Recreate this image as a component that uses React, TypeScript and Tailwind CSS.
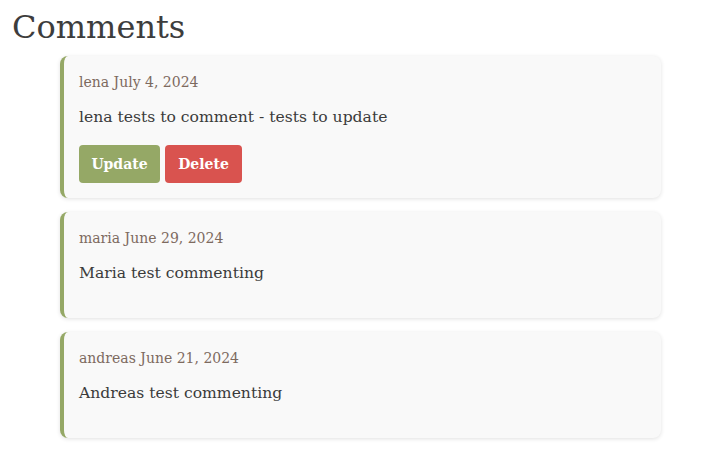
const comments = [
  { author: "lena", date: "July 4, 2024", text: "lena tests to comment - tests to update", own: true },
  { author: "maria", date: "June 29, 2024", text: "Maria test commenting", own: false },
  { author: "andreas", date: "June 21, 2024", text: "Andreas test commenting", own: false },
];

export default function App() {
  return (
    <div className="min-h-screen bg-white font-['DejaVu_Serif',serif] text-[#3b3b3b]">
      <h1 className="pl-3 pt-[7px] text-[32px] leading-[41px] text-[#3d3d3d]">Comments</h1>
      <div className="ml-[60px] mt-2 flex w-[601px] flex-col gap-[14px]">
        {comments.map((c) => (
          <div
            key={c.author}
            className="rounded-lg border-l-4 border-[#95a866] bg-[#f9f9f9] px-[15px] pt-[14px] pb-[15px] shadow-[0_1px_4px_rgba(0,0,0,0.12)]"
          >
            <p className="text-[14px] leading-6 text-[#7d6a5f]">
              {c.author} {c.date}
            </p>
            <p className="mt-[11px] text-[15.6px] leading-6 text-[#3b3b3b]">{c.text}</p>
            {c.own ? (
              <div className="mt-4 flex gap-[5px]">
                <button className="h-[38px] w-[81px] rounded bg-[#95a866] text-[14px] font-bold text-white">
                  Update
                </button>
                <button className="h-[38px] w-[77px] rounded bg-[#d9534f] text-[14px] font-bold text-white">
                  Delete
                </button>
              </div>
            ) : (
              <div className="h-[18px]" />
            )}
          </div>
        ))}
      </div>
    </div>
  );
}
